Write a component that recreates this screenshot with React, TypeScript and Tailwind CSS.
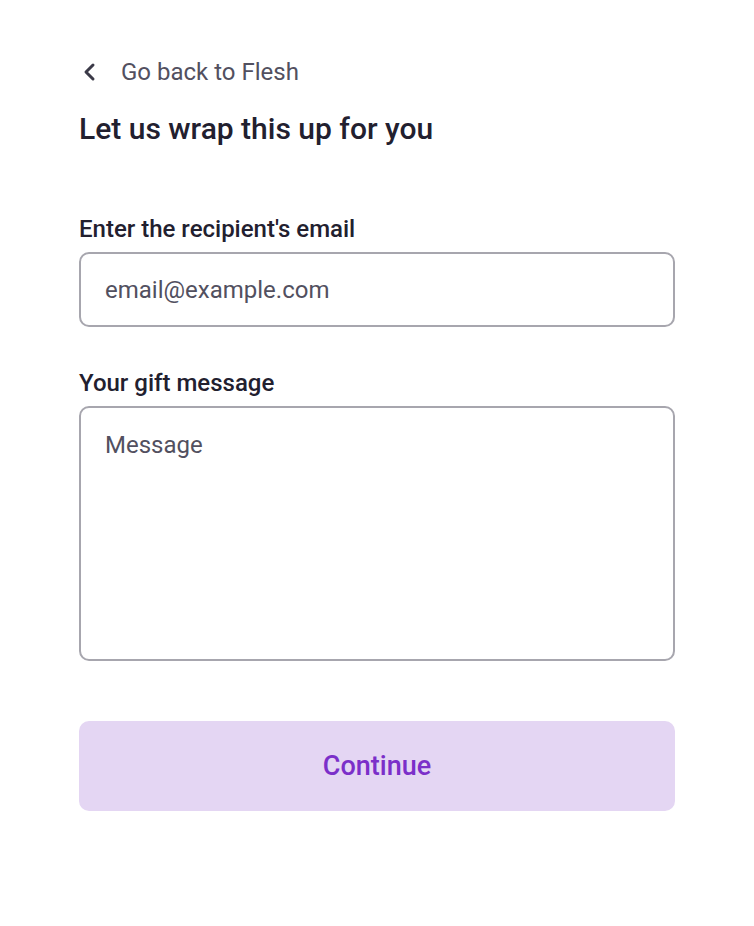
import React, { useState } from 'react';

const App: React.FC = () => {
  const [email, setEmail] = useState('');
  const [message, setMessage] = useState('');

  return (
    <div className="min-h-screen bg-white font-['Roboto',sans-serif] text-[#22202f]">
      <div className="w-[596px] ml-[79px] pt-[58px] flex flex-col">
        {/* Back link */}
        <button className="flex items-center gap-[24px] h-[28px] text-[#52505f] w-fit">
          <svg width="18" height="28" viewBox="0 0 18 28" className="shrink-0">
            <polyline
              points="14,7 7,14 14,21"
              fill="none"
              stroke="#3b3a48"
              strokeWidth="3"
              strokeLinecap="round"
              strokeLinejoin="round"
            />
          </svg>
          <span className="text-[24px] leading-[28px]">Go back to Flesh</span>
        </button>

        <h1 className="mt-[25px] text-[30px] leading-[36px] font-medium">Let us wrap this up for you</h1>

        <label className="mt-[67px] text-[24px] leading-[30px] font-medium" htmlFor="email">
          Enter the recipient's email
        </label>
        <input
          id="email"
          value={email}
          onChange={e => setEmail(e.target.value)}
          placeholder="email@example.com"
          className="mt-[8px] h-[75px] w-full rounded-[10px] border-2 border-[#a7a6ae] px-[24px] text-[24px] text-[#22202f] placeholder:text-[#52505f] outline-none"
        />

        <label className="mt-[41px] text-[24px] leading-[30px] font-medium" htmlFor="message">
          Your gift message
        </label>
        <textarea
          id="message"
          value={message}
          onChange={e => setMessage(e.target.value)}
          placeholder="Message"
          className="mt-[8px] h-[255px] w-full resize-none rounded-[10px] border-2 border-[#a7a6ae] px-[24px] py-[22px] text-[24px] leading-[30px] text-[#22202f] placeholder:text-[#52505f] outline-none"
        />

        <button className="mt-[60px] h-[90px] w-full rounded-[10px] bg-[#e4d6f3] text-[27px] font-medium text-[#7b2fc9]">
          Continue
        </button>
      </div>
    </div>
  );
};

export default App;
